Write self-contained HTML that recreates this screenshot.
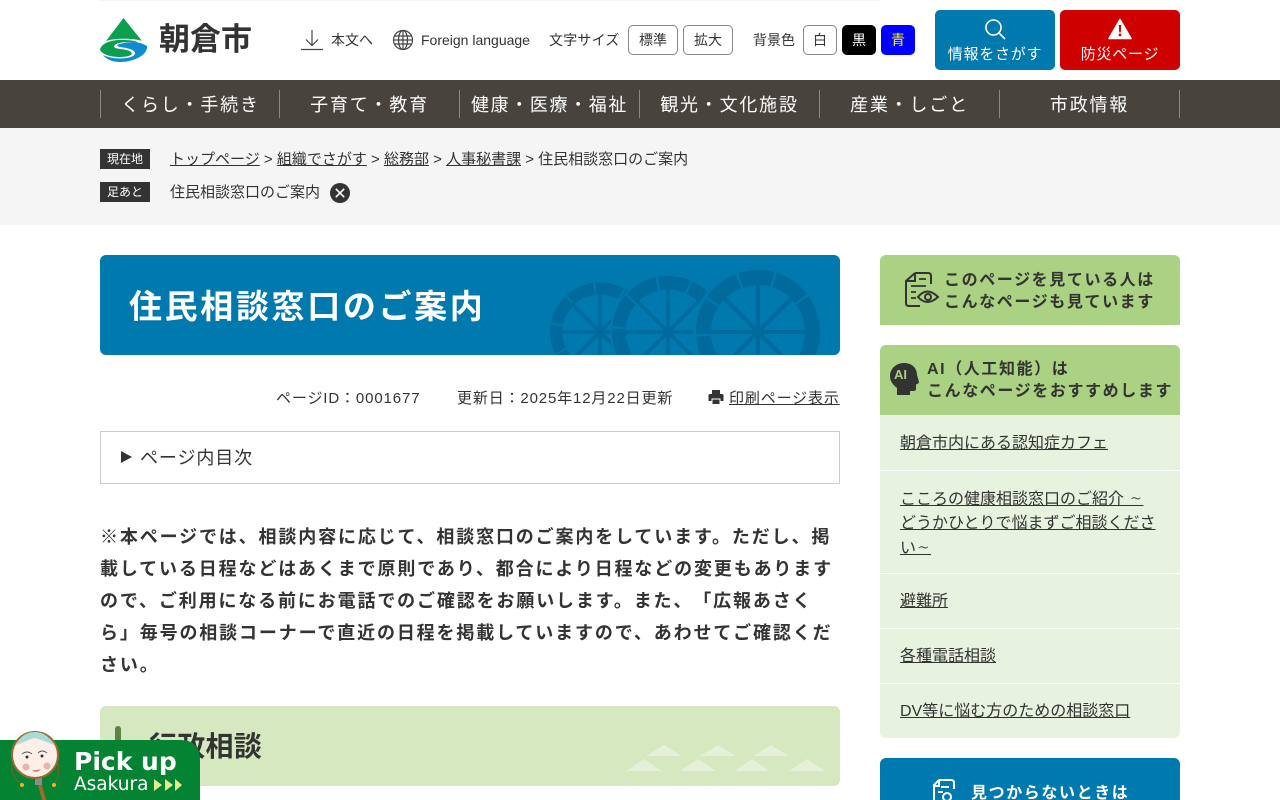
<!DOCTYPE html>
<html lang="ja"><head><meta charset="utf-8"><title>住民相談窓口のご案内</title>
<style>
html,body{margin:0;padding:0;width:1280px;height:800px;overflow:hidden;background:#fff}
body{position:relative;font-family:"Liberation Sans","Noto Sans CJK JP",sans-serif;color:#333;text-spacing-trim:space-all}
.a{position:absolute;white-space:nowrap}
a{color:inherit;text-decoration:underline}
.t{font-family:"NanumGothic","Noto Sans CJK JP",sans-serif}
.btn{position:absolute;box-sizing:border-box;border:1px solid #888;border-radius:5px;background:#fff;text-align:center;font-size:14px;line-height:28px;height:30px;top:25px}
.big{position:absolute;top:10px;width:120px;height:60px;border-radius:5px;color:#fff;text-align:center;font-size:15px;letter-spacing:.05em}
.big span{position:absolute;left:0;right:0;top:34px;line-height:22px}
.nav{position:absolute;top:80px;left:0;width:1280px;height:48px;background:#48443d}
.nav div{position:absolute;top:10px;height:28px;width:180px;box-sizing:border-box;border-left:1px solid #8d8a84;color:#fff;text-align:center;font-size:18px;line-height:30px;letter-spacing:.1em}
.tag{position:absolute;left:100px;width:50px;height:20px;background:#333;color:#fff;font-size:12px;line-height:20px;text-align:center}
.side{position:absolute;left:880px;width:300px;background:#e7f2df;font-size:16px;box-sizing:border-box;padding-left:20px}
.side a{display:block}
.green{position:absolute;left:880px;width:300px;background:#abd182;font-weight:700;font-size:16px;line-height:22px;letter-spacing:.1em}
</style></head><body>
<div class="a" style="left:100px;top:0;width:780px;height:1px;background:#f4f4f4"></div>

<svg class="a" style="left:100px;top:18px" width="48" height="44" viewBox="0 0 48 44">
<path d="M23.500 0 L42 23 C34 20 14 20 6 23Z" fill="#0aa050"/>
<path d="M0 32C1 26 9 22 21 22C31 22 37 23 38 25C30 23 16 24 14 28C13 32 26 30 31 34C34 37 28 39 20 39C11 39 3 37 0 32Z" fill="#0c9d4f"/>
<path d="M47 28C48 37 34 44 20 44C12 44 6 41 3 37C9 40 22 42 31 39C38 36 36 32 26 30C21 29 17 29 17 27C24 24 38 22 47 28Z" fill="#0f8bd0"/>
</svg>
<div class="a" style="left:159px;top:19px;font-size:31px;line-height:42px;font-weight:700;color:#333">朝倉市</div>

<svg class="a" style="left:300px;top:28px" width="24" height="23" viewBox="0 0 24 23" fill="none" stroke="#444" stroke-width="1.200"><path d="M12 2V17M6 11.500L12 17.500L18 11.500M1 21.500H23"/></svg>
<div class="a" style="left:331px;top:30px;font-size:14px;line-height:20px">本文へ</div>
<svg class="a" style="left:392px;top:29px" width="22" height="22" viewBox="0 0 22 22" fill="none" stroke="#444" stroke-width="1.200"><circle cx="11" cy="11" r="9.500"/><ellipse cx="11" cy="11" rx="4.500" ry="9.500"/><path d="M11 1.500V20.500M2.500 7H19.500M2.500 15H19.500M1.500 11H20.500"/></svg>
<div class="a" style="left:421px;top:30px;font-size:14px;line-height:20px">Foreign language</div>
<div class="a" style="left:549px;top:30px;font-size:14px;line-height:20px;letter-spacing:.2px">文字サイズ</div>
<div class="btn" style="left:628px;width:50px">標準</div>
<div class="btn" style="left:683px;width:50px">拡大</div>
<div class="a" style="left:753px;top:30px;font-size:14px;line-height:20px">背景色</div>
<div class="btn" style="left:803px;width:34px">白</div>
<div class="btn" style="left:842px;width:34px;background:#000;border-color:#000;color:#fff">黒</div>
<div class="btn" style="left:881px;width:34px;background:#00f;border-color:#00f;color:#ff0">青</div>

<div class="big" style="left:935px;background:#0079ae"><svg class="a" style="left:49px;top:8px" width="22" height="22" viewBox="0 0 22 22" fill="none" stroke="#fff" stroke-width="1.600"><circle cx="9.500" cy="9.500" r="7.500"/><path d="M15 15L21 21"/></svg><span>情報をさがす</span></div>
<div class="big" style="left:1060px;background:#cf0000"><svg class="a" style="left:48px;top:8px" width="24" height="22" viewBox="0 0 24 22"><path d="M12 1.500L23 20.500H1Z" fill="#fff" stroke="#fff" stroke-linejoin="round" stroke-width="1.500"/><path d="M10.800 7H13.200L12.800 14.500H11.200Z" fill="#cf0000"/><circle cx="12" cy="17" r="1.400" fill="#cf0000"/></svg><span>防災ページ</span></div>

<div class="nav">
<div style="left:100px">くらし・手続き</div><div style="left:279px">子育て・教育</div><div style="left:459px;letter-spacing:.09em">健康・医療・福祉</div><div style="left:639px">観光・文化施設</div><div style="left:819px">産業・しごと</div><div style="left:999px;width:181px;border-right:1px solid #8d8a84">市政情報</div>
</div>

<div class="a" style="left:0;top:128px;width:1280px;height:97px;background:#f5f5f5"></div>
<div class="tag" style="top:149px">現在地</div>
<div class="a" style="left:170px;top:149px;font-size:15px;line-height:22px"><a>トップページ</a> &gt; <a>組織でさがす</a> &gt; <a>総務部</a> &gt; <a>人事秘書課</a> &gt; 住民相談窓口のご案内</div>
<div class="tag" style="top:182px">足あと</div>
<div class="a" style="left:170px;top:182px;font-size:15px;line-height:22px">住民相談窓口のご案内</div>
<svg class="a" style="left:330px;top:183px" width="20" height="20" viewBox="0 0 20 20"><circle cx="10" cy="10" r="10" fill="#333"/><path d="M5.800 5.800L14.200 14.200M14.200 5.800L5.800 14.200" stroke="#fff" stroke-width="1.600"/></svg>

<svg class="a" style="left:100px;top:255px" width="740" height="100" viewBox="100 255 740 100">
<defs>
<clipPath id="c"><rect x="100" y="255" width="740" height="100" rx="6"/></clipPath>
<g id="s" fill="none" stroke="#006a9d" stroke-width="3.500"><path d="M-44 0H44M0 -44V44M-31 -31L31 31M31 -31L-31 31"/></g>
<circle id="r" r="47" fill="none" stroke="#006a9d" stroke-width="13" stroke-dasharray="28 2"/>
</defs>
<rect x="100" y="255" width="740" height="100" rx="6" fill="#0079ae"/>
<g clip-path="url(#c)">
<g transform="translate(600 332) scale(.93)"><use href="#s"/><use href="#r" transform="rotate(8)"/></g>
<circle cx="668" cy="332" r="58" fill="#0079ae"/>
<g transform="translate(668 332) scale(1.050)"><use href="#s"/><use href="#r" transform="rotate(3)"/></g>
<circle cx="758" cy="332" r="65" fill="#0079ae"/>
<g transform="translate(758 332) scale(1.160)"><use href="#s"/><use href="#r" transform="rotate(-5)"/></g>
</g>
</svg>
<div class="a" style="left:129px;top:283px;font-size:33px;line-height:48px;font-weight:700;color:#fff;letter-spacing:.08em">住民相談窓口のご案内</div>

<div class="a" style="left:276px;top:388px;font-size:15px;line-height:22px;letter-spacing:.87px">ページID：0001677</div>
<div class="a" style="left:457px;top:388px;font-size:15px;line-height:22px;letter-spacing:.85px">更新日：2025年12月22日更新</div>
<svg class="a" style="left:708px;top:389px" width="16" height="16" viewBox="0 0 16 16"><path d="M4 1H12V5H4ZM2 5H14Q15.500 5 15.500 6.500V12H12.500V9.500H3.500V12H.5V6.500Q.5 5 2 5ZM4.500 10.500H11.500V15H4.500Z" fill="#333"/></svg>
<div class="a" style="left:729px;top:388px;font-size:15px;line-height:22px;letter-spacing:.86px"><a>印刷ページ表示</a></div>

<div class="a" style="left:100px;top:431px;width:738px;height:51px;border:1px solid #ccc"></div>
<svg class="a" style="left:121px;top:451px" width="11" height="12" viewBox="0 0 11 12"><path d="M0 0L11 6L0 12Z" fill="#333"/></svg>
<div class="a" style="left:140px;top:445px;font-size:18px;line-height:26px;letter-spacing:.05em">ページ内目次</div>

<div class="a" style="left:100px;top:521px;width:740px;white-space:normal;font-size:18px;line-height:32px;font-weight:700;letter-spacing:1.860px">※本ページでは、相談内容に応じて、相談窓口のご案内をしています。ただし、掲載している日程などはあくまで原則であり、都合により日程などの変更もありますので、ご利用になる前にお電話でのご確認をお願いします。また、「広報あさくら」毎号の相談コーナーで直近の日程を掲載していますので、あわせてご確認ください。</div>

<svg class="a" style="left:100px;top:706px" width="740" height="80" viewBox="0 0 740 80"><rect width="740" height="80" rx="6" fill="#d5e8c0"/><rect x="15" y="20" width="6" height="42" rx="3" fill="#5f8148"/><g fill="#e4f0d8"><path d="M526 65L544 53L562 65ZM580 65L598 53L616 65ZM634 65L652 53L670 65ZM689 65L707 53L725 65ZM546 50L564 39L582 50ZM600 50L618 39L636 50ZM653 50L671 39L689 50Z"/></g></svg>
<div class="a" style="left:149px;top:726px;font-size:28px;line-height:42px;font-weight:700;letter-spacing:.01em">行政相談</div>

<div class="green" style="top:255px;height:70px;border-radius:6px 6px 0 0"></div>
<svg class="a" style="left:904px;top:271px" width="36" height="37" viewBox="0 0 36 37" fill="none" stroke="#333" stroke-width="2"><path d="M11 2H24Q27 2 27 5V13M11 2L2 10V32Q2 35 5 35H16M11 2V10H2"/><path d="M15 8H22M7 15H22M7 21H12M7 27H12" stroke-width="1.800"/><path d="M14 26Q23 15 34 26Q23 36 14 26Z"/><circle cx="24" cy="26" r="3"/></svg>
<div class="green" style="top:270px;left:944px;width:230px;background:none">このページを見ている人は<br>こんなページも見ています</div>

<div class="green" style="top:345px;height:70px;border-radius:6px 6px 0 0"></div>
<svg class="a" style="left:890px;top:363px" width="29" height="32" viewBox="0 0 29 32"><path d="M14 0C22 0 27 5 27 12L29 19C29 21 26 21 26 22V26C26 28 24 28 22 28H20V32H7V25C3 22 0 18 0 13C0 6 6 0 14 0Z" fill="#333"/><text x="4" y="16" font-size="13" font-weight="700" fill="#abd182" font-family="Liberation Sans">AI</text></svg>
<div class="green" style="top:359px;left:927px;width:250px;background:none">AI（人工知能）は<br>こんなページをおすすめします</div>

<div class="side" style="top:415px;height:55px;line-height:57px"><a>朝倉市内にある認知症カフェ</a></div>
<div class="side" style="top:471px;height:102px;padding-top:16px;padding-right:20px;line-height:24px"><a>こころの健康相談窓口のご紹介 <span class="t">～</span><br>どうかひとりで悩まずご相談ください<span class="t">～</span></a></div>
<div class="side" style="top:574px;height:54px;line-height:55px"><a>避難所</a></div>
<div class="side" style="top:629px;height:54px;line-height:55px"><a>各種電話相談</a></div>
<div class="side" style="top:684px;height:54px;line-height:55px;border-radius:0 0 6px 6px"><a>DV等に悩む方のための相談窓口</a></div>

<div class="a" style="left:880px;top:758px;width:300px;height:42px;background:#0079ae;border-radius:6px 6px 0 0"></div>
<svg class="a" style="left:932px;top:779px" width="24" height="21" viewBox="0 0 24 21" fill="none" stroke="#fff" stroke-width="2"><path d="M7 1H19Q22 1 22 4V10M7 1L2 6V21M7 1V7H2"/><path d="M9 8H17M6 13H11"/><circle cx="15" cy="18" r="4"/></svg>
<div class="a" style="left:971px;top:782px;font-size:16px;line-height:24px;font-weight:700;color:#fff;letter-spacing:.1em">見つからないときは</div>

<svg class="a" style="left:0;top:728px" width="200" height="72" viewBox="0 0 200 72">
<path d="M0 12H180Q200 12 200 32V72H0Z" fill="#048332"/>
<g fill="none" stroke="#8a5a2b" stroke-width="1"><path d="M12 36Q10 48 22 57M58 36Q60 48 54 57"/></g>
<circle cx="22" cy="57" r="2" fill="#f2b01e"/><circle cx="54" cy="57" r="2" fill="#f2b01e"/>
<path d="M38 57H42L46 72H42Z" fill="#a06a2c"/>
<rect x="35" y="49" width="7" height="8" fill="#8c8c8c"/>
<circle cx="35" cy="27" r="23" fill="#fdeee7" stroke="#9c6a30" stroke-width="2"/>
<path d="M16 17C20 8 27 4 35 4C43 4 50 9 54 17C46 14 40 11 34 10C28 12 22 15 16 17Z" fill="#a9dcd6"/>
<circle cx="26" cy="39" r="3.500" fill="#e8b4ae"/><circle cx="47" cy="38" r="3.500" fill="#e8b4ae"/>
<path d="M22 26Q27 22 32 26M38 25Q42 21 47 25" fill="none" stroke="#555" stroke-width="1"/>
<circle cx="27" cy="29" r="1.500" fill="#333"/><circle cx="42" cy="28" r="1.500" fill="#333"/>
<path d="M32 42Q36 46 41 41Q36 43 32 42Z" fill="#c26a55"/>
</svg>
<div class="a" style="left:74px;top:745px;font-size:25px;line-height:34px;font-weight:700;color:#fff;font-family:'DejaVu Sans',sans-serif">Pick up</div>
<div class="a" style="left:74px;top:773px;font-size:18.500px;line-height:24px;color:#fff;font-family:'DejaVu Sans',sans-serif">Asakura</div>
<svg class="a" style="left:153px;top:779px" width="30" height="12" viewBox="0 0 30 12" fill="#e3ec8d"><path d="M1 0L9 6L1 12ZM12 0L20 6L12 12ZM22 0L29 6L22 12Z"/></svg>
</body></html>
